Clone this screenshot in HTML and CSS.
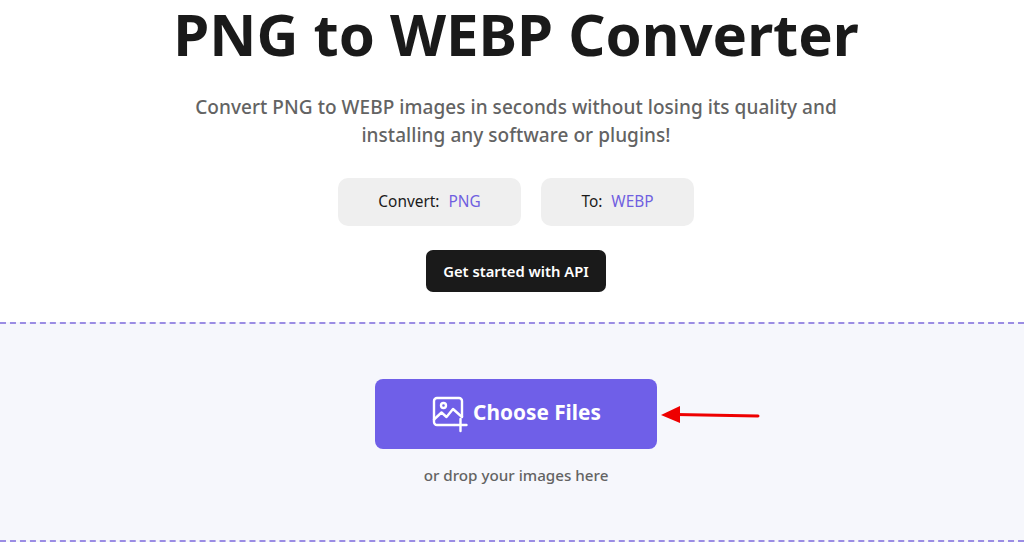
FILE: index.html
```html
<!DOCTYPE html>
<html lang="en">
<head>
    <meta charset="UTF-8">
    <title>PNG to WEBP Converter</title>
    <link rel="stylesheet" href="styles.css">
</head>
<body>
    <div class="hero">
        <h1>PNG to WEBP Converter</h1>
        <p class="subtitle">Convert PNG to WEBP images in seconds without losing its quality and installing any software or plugins!</p>
        <div class="formats">
            <div class="format format-from">Convert: <span class="format-name">PNG</span></div>
            <div class="format format-to">To: <span class="format-name">WEBP</span></div>
        </div>
        <a class="api-button" href="#">Get started with API</a>
    </div>

    <div class="dropzone">
        <div class="choose-wrap">
            <button class="choose-button">
                <svg class="choose-icon" viewBox="0 0 34 34" fill="none" stroke="#fff" stroke-width="2.400" stroke-linecap="round" stroke-linejoin="round">
                    <path d="M21 28H4A3 3 0 0 1 1 25V4A3 3 0 0 1 4 1h22A3 3 0 0 1 29 4V20"/>
                    <circle cx="10.500" cy="8.500" r="2.500"/>
                    <path d="M1 22.500l7.500-7 5 4.500L20 12l9 8"/>
                    <path d="M27.500 22v12M21.500 28h12"/>
                </svg>
                <span class="choose-label">Choose Files</span>
            </button>
            <svg class="arrow" viewBox="0 0 100 20">
                <path d="M15 10.500L97 12" stroke="#ee0000" stroke-width="3" stroke-linecap="round"/>
                <path d="M0 11L19 2V19Z" fill="#ee0000"/>
            </svg>
        </div>
        <p class="drop-text">or drop your images here</p>
    </div>
</body>
</html>
```

FILE: styles.css
```css
body {
    margin: 0;
    background-color: #fff;
    font-family: "Noto Sans", "Open Sans", sans-serif;
    color: #1a1a1a;
    text-align: center;
    overflow: hidden;
}
.hero {
    display: flow-root;
    height: 322px;
    padding-left: 8px;
    box-sizing: border-box;
}
h1 {
    margin: -1px 0 0;
    font-size: 58px;
    line-height: 70px;
    font-weight: 700;
}
.subtitle {
    width: 680px;
    margin: 24px auto 0;
    font-size: 19px;
    line-height: 28px;
    font-weight: 500;
    letter-spacing: 0.05px;
    color: #636363;
}
.formats {
    display: flex;
    justify-content: center;
    gap: 20px;
    margin-top: 29px;
}
.format {
    height: 48px;
    line-height: 48px;
    background-color: #efefef;
    border-radius: 10px;
    font-size: 15.400px;
    box-sizing: border-box;
}
.format-from {
    width: 183px;
}
.format-to {
    width: 153px;
}
.format-name {
    margin-left: 5px;
    color: #6f5fe0;
}
.api-button {
    display: block;
    width: 180px;
    height: 42px;
    margin: 24px auto 0;
    line-height: 42px;
    background-color: #1a1a1a;
    border-radius: 7px;
    color: #fff;
    font-size: 14.800px;
    font-weight: 600;
    text-decoration: none;
}
.dropzone {
    height: 220px;
    box-sizing: border-box;
    padding-top: 55px;
    padding-left: 8px;
    background-color: #f6f7fc;
    border-top: 2px dashed #9b8de4;
    border-bottom: 2px dashed #9b8de4;
}
.choose-wrap {
    position: relative;
    width: 282px;
    margin: 0 auto;
}
.choose-button {
    display: flex;
    align-items: center;
    justify-content: center;
    gap: 6px;
    width: 282px;
    height: 70px;
    padding: 0 0 0 2px;
    border: none;
    border-radius: 8px;
    background-color: #6f5fe8;
    color: #fff;
    font-family: inherit;
    font-size: 20.800px;
    font-weight: 700;
}
.choose-icon {
    width: 34px;
    height: 34px;
    overflow: visible;
}
.choose-label {
    margin-bottom: 4px;
}
.arrow {
    position: absolute;
    left: 286px;
    top: 25px;
    width: 100px;
    height: 20px;
}
.drop-text {
    margin: 15px 0 0;
    font-size: 15.200px;
    line-height: 22px;
    font-weight: 500;
    color: #636363;
}
```
